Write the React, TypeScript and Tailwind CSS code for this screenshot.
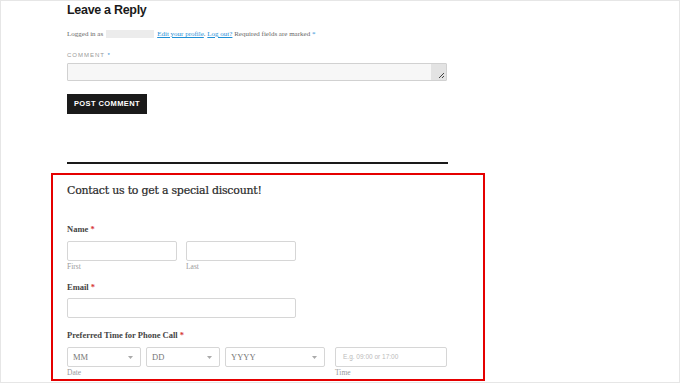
import React from 'react';

const serif = "font-['DejaVu_Serif','Liberation_Serif',serif]";
const body = "font-['Liberation_Serif','Times_New_Roman',serif]";
const sans = "font-['Liberation_Sans',Arial,sans-serif]";

const Req = () => <span className="text-[#d63637]"> *</span>;

const Field: React.FC<{ className?: string; placeholder?: string }> = ({ className = '', placeholder }) => (
  <div
    className={`h-[20px] border border-[#d6d6d6] rounded-[2px] bg-white flex items-center px-[7px] text-[6.5px] text-[#bbb] ${sans} ${className}`}
  >
    {placeholder}
  </div>
);

const Select: React.FC<{ label: string; className?: string }> = ({ label, className = '' }) => (
  <div
    className={`h-[20px] border border-[#d6d6d6] rounded-[2px] bg-white flex items-center justify-between pl-[5px] pr-[7px] text-[8.5px] text-[#777] ${body} ${className}`}
  >
    <span>{label}</span>
    <svg width="5" height="3" viewBox="0 0 5 3">
      <path d="M0 0 L5 0 L2.5 3 Z" fill="#aaa" />
    </svg>
  </div>
);

const Sub: React.FC<{ children: React.ReactNode }> = ({ children }) => (
  <div className={`text-[7.5px] leading-[10px] text-[#999] mt-[1px] ${body}`}>{children}</div>
);

const Label: React.FC<{ children: React.ReactNode }> = ({ children }) => (
  <div className={`text-[8.5px] leading-[12px] font-bold text-[#444] ${body}`}>
    {children}
    <Req />
  </div>
);

export default function App() {
  return (
    <div className="w-[680px] h-[383px] border border-[#e6e6e6] bg-white overflow-hidden">
      <div className="ml-[66px] w-[380px]">
        <h2 className={`${sans} font-bold text-[12.5px] leading-[18px] tracking-[-0.3px] text-[#1a1a1a]`}>
          Leave a Reply
        </h2>
        <p className={`mt-[10px] text-[7px] leading-[10px] text-[#686868] ${body} flex items-center`}>
          <span>Logged in as</span>
          <span className="inline-block w-[48px] h-[8px] ml-[3px] mr-[3px] bg-[#ececec]" />
          <span className="text-[#1f8fd6] underline">Edit your profile</span>
          <span>.&nbsp;</span>
          <span className="text-[#1f8fd6] underline">Log out?</span>
          <span>&nbsp;Required fields are marked</span>
          <span className="text-[#1f8fd6]">&nbsp;*</span>
        </p>
        <div className={`mt-[11px] ${sans} text-[6px] leading-[10px] tracking-[1px] text-[#999]`}>
          COMMENT <span className="text-[#1f8fd6]">*</span>
        </div>
        <div className="relative mt-[3px] h-[18px] bg-[#f7f7f7] border border-[#d1d1d1] rounded-[1px]">
          <div className="absolute right-0 top-0 bottom-0 w-[15px] bg-[#e3e3e3]">
            <svg className="absolute right-[1px] bottom-[1px]" width="8" height="8" viewBox="0 0 8 8">
              <path d="M7 2 L2 7 M7 5 L5 7" stroke="#444" strokeWidth="1" />
            </svg>
          </div>
        </div>
        <div className={`mt-[13px] w-[80px] h-[20px] bg-[#1a1a1a] text-white flex items-center justify-center ${sans} font-bold text-[7.5px] tracking-[0.4px]`}>
          POST COMMENT
        </div>
        <div className="mt-[48px] h-[2px] bg-[#1a1a1a] w-[381px]" />
      </div>

      <div className="ml-[50px] mt-[9px] w-[434px] h-[208px] border-2 border-[#e50000] px-[14px] pt-[7px]">
        <h3 className={`${serif} text-[11px] leading-[18px] tracking-[-0.25px] text-[#2a2a2a] [-webkit-text-stroke:0.2px_#2a2a2a]`}>
          Contact us to get a special discount!
        </h3>
        <div className="mt-[23px]">
          <Label>Name</Label>
          <div className="flex gap-[9px] mt-[6px]">
            <div className="w-[110px]">
              <Field />
              <Sub>First</Sub>
            </div>
            <div className="w-[110px]">
              <Field />
              <Sub>Last</Sub>
            </div>
          </div>
        </div>
        <div className="mt-[9px]">
          <Label>Email</Label>
          <Field className="mt-[5px] w-[229px]" />
        </div>
        <div className="mt-[11px]">
          <Label>Preferred Time for Phone Call</Label>
          <div className="flex mt-[6px]">
            <div className="flex flex-col">
              <div className="flex gap-[5px]">
                <Select label="MM" className="w-[74px]" />
                <Select label="DD" className="w-[74px]" />
                <Select label="YYYY" className="w-[100px]" />
              </div>
              <Sub>Date</Sub>
            </div>
            <div className="ml-[10px] w-[112px]">
              <Field placeholder="E.g. 09:00 or 17:00" />
              <Sub>Time</Sub>
            </div>
          </div>
        </div>
      </div>
    </div>
  );
}
